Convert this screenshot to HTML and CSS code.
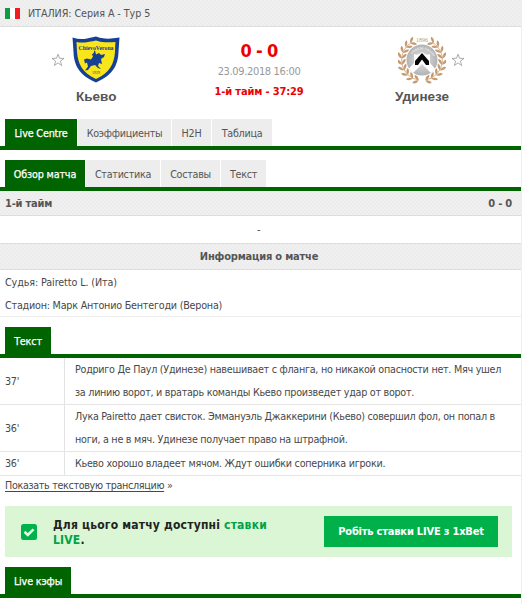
FILE: index.html
```html
<!DOCTYPE html>
<html lang="ru">
<head>
<meta charset="utf-8">
<title>Кьево - Удинезе</title>
<link rel="stylesheet" href="styles.css">
</head>
<body>
<div class="page">
  <header class="league shade">
    <span class="flag"><i></i><i></i><i></i></span>
    <span class="league-name">ИТАЛИЯ: Серия А - Тур 5</span>
  </header>

  <section class="match">
    <div class="team home">
      <div class="emblem">
        <svg class="star" viewBox="0 0 14 14"><path d="M7 1.2 8.5 5.3 13 5.4 9.4 8.1 10.7 12.5 7 9.9 3.3 12.5 4.6 8.1 1 5.4 5.5 5.3Z"/></svg>
        <svg class="crest" viewBox="0 0 48 48">
          <path fill="#164095" d="M.5 1.5Q8 4 15 2.5T24 .5Q27 2 33 2.5T47.500 1.500Q47 8 46.500 16C46 29 41 39 24 46.500 7 39 2 29 1.500 16Q1 8 .5 1.500Z"/>
          <path fill="#f8e51b" d="M4.500 6Q10 7 16 6T24 4.500Q28 6 33 6.200T43.500 6Q43 10 43 16C42 28 38 36.500 24 43 10 36.500 6 28 5 16Z"/>
          <text class="crest-name" x="24" y="14" text-anchor="middle" textLength="35" lengthAdjust="spacingAndGlyphs">ChievoVerona</text>
          <path fill="#164095" d="m22 15 1-.5 1 4 3-1.500 2 2 4-1-1 3-3 2 1 5-3-1-1 3 3 3-3-1-3-3-4 1-3 4-3 .5 3-4-1-4-2 1-1-4 3-1 4 1 2-3-1-2 2-2Z"/>
          <text class="crest-year" x="24" y="38" text-anchor="middle">1929</text>
        </svg>
      </div>
      <div class="team-name kievo">Кьево</div>
    </div>

    <div class="result">
      <div class="score">0 - 0</div>
      <div class="date">23.09.2018 16:00</div>
      <div class="clock">1-й тайм - 37:29</div>
    </div>

    <div class="team away">
      <div class="emblem">
        <svg class="crest" viewBox="0 0 48 48">
          <defs>
            <radialGradient id="disc"><stop offset="0" stop-color="#e4e4e4"/><stop offset="1" stop-color="#b2b3b5"/></radialGradient>
            <clipPath id="round"><circle cx="24" cy="24" r="15.500"/></clipPath>
            <g id="leaf" fill="#c59a70"><path d="M0-3.800Q2.800-1 0 3.200-2.400-1 0-3.800Z" transform="translate(-2 0) rotate(-38)"/><path d="M0-3.800Q2.800-1 0 3.200-2.400-1 0-3.800Z" transform="translate(2 0) rotate(38)"/></g>
            <g id="branch">
              <path d="M34 6A20.500 20.500 0 0 1 28 44" fill="none" stroke="#d6b595" stroke-width="1"/>
              <use href="#leaf" transform="rotate(28 24 24) translate(24 3.500) rotate(-90)"/>
              <use href="#leaf" transform="rotate(45 24 24) translate(24 3.500) rotate(-90)"/>
              <use href="#leaf" transform="rotate(62 24 24) translate(24 3.500) rotate(-90)"/>
              <use href="#leaf" transform="rotate(79 24 24) translate(24 3.500) rotate(-90)"/>
              <use href="#leaf" transform="rotate(96 24 24) translate(24 3.500) rotate(-90)"/>
              <use href="#leaf" transform="rotate(113 24 24) translate(24 3.500) rotate(-90)"/>
              <use href="#leaf" transform="rotate(130 24 24) translate(24 3.500) rotate(-90)"/>
              <use href="#leaf" transform="rotate(147 24 24) translate(24 3.500) rotate(-90)"/>
              <use href="#leaf" transform="rotate(164 24 24) translate(24 3.500) rotate(-90)"/>
            </g>
          </defs>
          <use href="#branch"/>
          <use href="#branch" transform="matrix(-1 0 0 1 48 0)"/>
          <circle cx="24" cy="24" r="15.500" fill="url(#disc)"/>
          <g clip-path="url(#round)">
            <path fill="#fff" d="M16 18Q20 20 24 16 28 20 32 18V27L40 36 36 40 24 28 12 40 8 36 16 27Z"/>
            <path fill="#050505" d="M24 17 31 25V29H28L24 23.500 20 29H17V25Z"/>
          </g>
          <path id="arc" fill="none" d="M12 22A12.500 12 0 0 1 36 22"/>
          <text class="crest-arc"><textPath href="#arc" startOffset="4">UDINESE CALCIO</textPath></text>
          <text class="crest-founded" x="24" y="6" text-anchor="middle">1896</text>
        </svg>
        <svg class="star" viewBox="0 0 14 14"><path d="M7 1.200 8.500 5.300 13 5.400 9.400 8.100 10.700 12.500 7 9.900 3.300 12.500 4.600 8.100 1 5.400 5.500 5.300Z"/></svg>
      </div>
      <div class="team-name udinese">Удинезе</div>
    </div>
  </section>

  <nav class="tabs main-tabs">
    <a class="tab active"><span>Live Centre</span></a>
    <a class="tab"><span>Коэффициенты</span></a>
    <a class="tab"><span>H2H</span></a>
    <a class="tab"><span>Таблица</span></a>
  </nav>

  <nav class="tabs sub-tabs">
    <a class="tab active"><span>Обзор матча</span></a>
    <a class="tab"><span>Статистика</span></a>
    <a class="tab"><span>Составы</span></a>
    <a class="tab"><span>Текст</span></a>
  </nav>

  <div class="half shade"><span>1-й тайм</span><span>0 - 0</span></div>
  <div class="empty">-</div>
  <div class="info-title shade"><span>Информация о матче</span></div>
  <div class="info">
    <div class="judge">Судья: Pairetto L. (Ита)</div>
    <div class="stadium">Стадион: Марк Антонио Бентегоди (Верона)</div>
  </div>

  <nav class="tabs text-tabs"><a class="tab active"><span>Текст</span></a></nav>

  <div class="events">
    <div class="event">
      <div class="minute">37'</div>
      <div class="comment">Родриго Де Паул (Удинезе) навешивает с фланга, но никакой опасности нет. Мяч ушел<br>за линию ворот, и вратарь команды Кьево произведет удар от ворот.</div>
    </div>
    <div class="event">
      <div class="minute">36'</div>
      <div class="comment">Лука Pairetto дает свисток. Эммануэль Джаккерини (Кьево) совершил фол, он попал в<br>ноги, а не в мяч. Удинезе получает право на штрафной.</div>
    </div>
    <div class="event">
      <div class="minute">36'</div>
      <div class="comment">Кьево хорошо владеет мячом. Ждут ошибки соперника игроки.</div>
    </div>
  </div>
  <div class="more"><a>Показать текстовую трансляцию</a> »</div>

  <section class="promo">
    <svg class="check" viewBox="0 0 16 16"><rect width="16" height="16" rx="2.500" fill="#00b24a"/><path d="M3.500 7.800 6.800 11 12.500 5.300" fill="none" stroke="#e9f9e6" stroke-width="2.600"/></svg>
    <div class="promo-text">Для цього матчу доступні <b>ставки</b><br><b>LIVE</b>.</div>
    <a class="bet"><span>Робіть ставки LIVE з 1xBet</span></a>
  </section>

  <nav class="tabs odds-tabs"><a class="tab active"><span>Live кэфы</span></a></nav>
</div>
</body>
</html>
```
FILE: styles.css
```css
* { box-sizing: border-box; }

body {
  margin: 0;
  background: #fff;
  color: #484848;
  font: 10.7px/23px "DejaVu Sans Condensed", "DejaVu Sans", sans-serif;
  font-stretch: condensed;
  letter-spacing: -.27px;
  white-space: nowrap;
}

.page { width: 522px; height: 604px; border-right: 1px solid #eee; overflow: hidden; }

.shade {
  background: #eee conic-gradient(#ececec 25%, #f0f0f0 0 50%, #ececec 0 75%, #f0f0f0 0) 0 0 / 4px 4px;
}

.league { display: flex; align-items: center; height: 27px; padding-left: 5px; border-bottom: 1px solid #ddd; color: #555; }
.league-name { letter-spacing: -.07px; }
.flag { display: flex; width: 15px; height: 11px; margin-right: 8px; }
.flag i { flex: 1; background: #109a43; }
.flag i:nth-child(2) { background: #fff; }
.flag i:nth-child(3) { background: #ef1c24; }

.match { display: grid; grid-template-columns: 192px 134px 195px; height: 92px; }
.emblem { display: flex; align-items: center; height: 48px; margin-top: 9px; letter-spacing: 0; }
.home .emblem { padding-left: 51px; gap: 7px; }
.away .emblem { padding-left: 72px; gap: 5px; }
.star { width: 14px; height: 14px; fill: #fff; stroke: #999; stroke-width: .8; }
.crest { width: 48px; height: 48px; }
.crest-name { font: bold 6.500px "Liberation Serif", serif; fill: #164095; }
.crest-year { font: 4px "Liberation Serif", serif; fill: #164095; }
.crest-arc { font: bold 3px "Liberation Sans", sans-serif; fill: #eee; }
.crest-founded { font: 6px "Liberation Serif", serif; fill: #c59a70; }
.team-name { font: bold 13.500px/20px "Liberation Sans", Arial, sans-serif; color: #555; margin-top: 3px; letter-spacing: 0; }
.kievo { padding-left: 76px; }
.udinese { padding-left: 69px; }

.result { text-align: center; font-size: 11px; }
.score { margin-top: 13px; font-size: 18px; font-weight: bold; line-height: 22px; letter-spacing: -.7px; color: #e00; }
.date { line-height: 20px; letter-spacing: -.35px; color: #999; }
.clock { line-height: 20px; font-weight: bold; letter-spacing: -.15px; color: #e00; }

.tabs { display: flex; gap: 1px; padding-left: 5px; border-bottom: 4px solid #006400; }
.tab {
  display: flex; justify-content: center; align-items: center; height: 27px; padding-top: 2px;
  background: #ededed; color: #555;
}
.tab.active { background: #006400; color: #fff; letter-spacing: -.15px; -webkit-text-stroke: .25px #fff; }
.main-tabs .tab:nth-child(1) { width: 72px; }
.main-tabs .tab:nth-child(2) { width: 93px; }
.main-tabs .tab:nth-child(3) { width: 39px; }
.main-tabs .tab:nth-child(4) { width: 60px; }
.sub-tabs { margin-top: 10px; }
.sub-tabs .tab:nth-child(1) { width: 80px; }
.sub-tabs .tab:nth-child(2) { width: 74px; }
.sub-tabs .tab:nth-child(3) { width: 59px; }
.sub-tabs .tab:nth-child(4) { width: 45px; }

.half, .info-title, .bet { font-size: 11px; font-weight: bold; letter-spacing: -.2px; }
.half { display: flex; justify-content: space-between; height: 25px; padding: 1px 9px 0 5px; border-bottom: 1px solid #ddd; color: #555; }
.empty { height: 28px; line-height: 28px; border-bottom: 1px solid #ddd; text-align: center; padding-right: 4px; }
.info-title { height: 26px; line-height: 26px; border-bottom: 1px solid #ddd; text-align: center; color: #555; padding-right: 3px; }
.info { height: 47px; padding-left: 5px; border-bottom: 1px solid #eee; padding-top: 1px; letter-spacing: -.22px; }
.judge { letter-spacing: -.1px; }

.text-tabs { margin-top: 10px; }
.text-tabs .tab { width: 46px; }

.event { display: grid; grid-template-columns: 65px 1fr; border-bottom: 1px solid #e6e6e6; }
.minute { display: flex; align-items: center; padding-left: 5px; border-right: 1px solid #e3e3e3; }
.comment { padding-left: 10px; }
.more { height: 20px; line-height: 20px; padding-left: 5px; letter-spacing: -.33px; }
.more a { text-decoration: underline; text-underline-offset: 2px; }

.promo { display: flex; align-items: center; width: 507px; height: 51px; margin: 10px 0 10px 5px; padding: 0 14px 0 16px; background: #dbf6d4; }
.check { width: 16px; height: 16px; margin-right: 16px; }
.promo-text { flex: 1; padding-top: 2px; font-size: 12px; font-weight: bold; line-height: 15px; letter-spacing: .2px; color: #222; }
.promo-text b { color: #00a347; }
.bet { display: flex; justify-content: center; align-items: center; width: 174px; height: 31px; background: #00b149; color: #fff; }
.odds-tabs .tab { width: 66px; }
```
